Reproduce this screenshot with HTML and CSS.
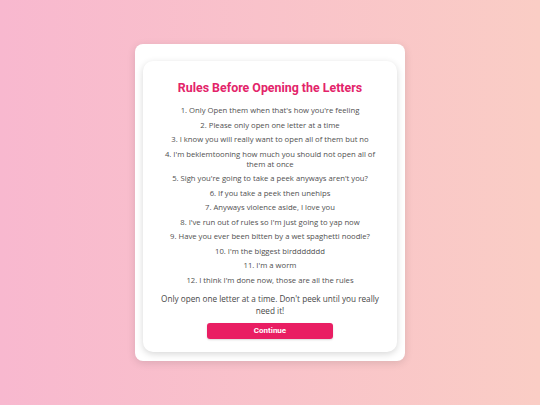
FILE: index.html
```html
<!DOCTYPE html>
<html>
<head>
<meta charset="utf-8">
<link rel="stylesheet" href="styles.css">
</head>
<body>
<div class="page">
  <div class="modal">
    <div class="card">
      <h2 class="title">Rules Before Opening the Letters</h2>
      <ol class="rules">
        <li>1. Only Open them when that's how you're feeling</li>
        <li>2. Please only open one letter at a time</li>
        <li>3. I know you will really want to open all of them but no</li>
        <li>4. I'm beklemtooning how much you should not open all of them at once</li>
        <li>5. Sigh you're going to take a peek anyways aren't you?</li>
        <li>6. If you take a peek then unehips</li>
        <li>7. Anyways violence aside, I love you</li>
        <li>8. I've run out of rules so I'm just going to yap now</li>
        <li>9. Have you ever been bitten by a wet spaghetti noodle?</li>
        <li>10. I'm the biggest birddddddd</li>
        <li>11. I'm a worm</li>
        <li>12. I think I'm done now, those are all the rules</li>
      </ol>
      <p class="note">Only open one letter at a time. Don't peek until you really need it!</p>
      <button class="btn">Continue</button>
    </div>
  </div>
</div>
</body>
</html>
```
FILE: styles.css
```css
html, body {
  margin: 0;
  padding: 0;
}
body {
  width: 540px;
  height: 405px;
  background: linear-gradient(to right, #f8b8cf, #facdc5);
  font-family: "Open Sans", "Liberation Sans", sans-serif;
}
.page {
  height: 405px;
  display: flex;
  align-items: center;
  justify-content: center;
}
.modal {
  width: 270px;
  box-sizing: border-box;
  background: #fff;
  border-radius: 8px;
  padding: 17px 8px 9px 8px;
  box-shadow: 0 2px 8px rgba(0, 0, 0, 0.12);
}
.card {
  background: #fff;
  border-radius: 10px;
  box-shadow: 0 2px 7px rgba(0, 0, 0, 0.16);
  padding: 19px 16px 13px 16px;
  display: flex;
  flex-direction: column;
  align-items: center;
  text-align: center;
}
.title {
  margin: 0 0 9px 0;
  font-family: Roboto, "Liberation Sans", sans-serif;
  font-weight: 700;
  font-size: 12.4px;
  line-height: 16px;
  color: #e3246a;
}
.rules {
  list-style: none;
  margin: 0;
  padding: 0;
  display: flex;
  flex-direction: column;
  gap: 4.5px;
}
.rules li {
  font-size: 7.7px;
  line-height: 10px;
  color: #505050;
}
.note {
  margin: 8px 0 6px 0;
  font-size: 8.2px;
  line-height: 12px;
  color: #484848;
}
.btn {
  width: 126px;
  height: 16px;
  border: none;
  border-radius: 3px;
  background: #e91e63;
  color: #fff;
  font-family: Roboto, "Liberation Sans", sans-serif;
  font-weight: 700;
  font-size: 8px;
  padding: 0;
  box-shadow: 0 1px 2px rgba(0, 0, 0, 0.15);
}
```
